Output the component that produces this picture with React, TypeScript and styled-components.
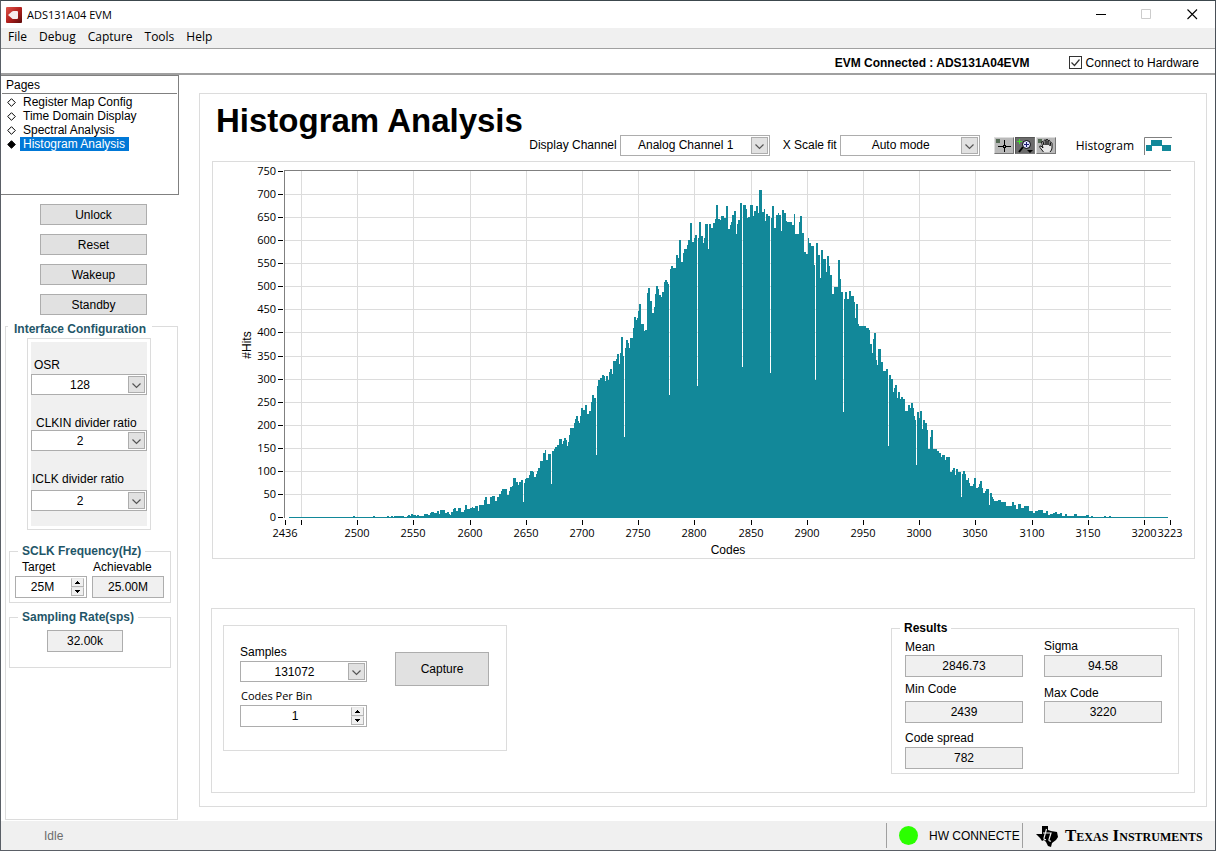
import React from "react";
import styled, { createGlobalStyle } from "styled-components";

const sans = `"Liberation Sans", Arial, sans-serif`;
const ui = `"Open Sans", "Segoe UI", sans-serif`;
const teal = "#128899";
const line = "#dcdcdc";
const edge = "#adadad";

const GlobalStyle = createGlobalStyle`
  *, *::before, *::after { box-sizing: border-box; }
  body { margin: 0; background: #fff; color: #000; font: 12px/14px ${sans}; }
  button, input, select { font: inherit; color: inherit; margin: 0; border-radius: 0; }
`;

const Window = styled.div`
  min-height: 100vh;
  display: flex;
  flex-direction: column;
  background: #fff;
  border: 1px solid #5a5f66;
  border-top-color: #3c474d;
  border-right-color: #4a5058;
`;

const TitleBar = styled.header`
  display: flex;
  align-items: center;
  height: 27px;
  padding-left: 5px;
  font-family: ${ui};
  font-size: 11px;
`;

const WindowTitle = styled.span`
  flex: 1;
  padding-left: 5px;
`;

const CaptionButton = styled.button`
  width: 46px;
  height: 27px;
  padding: 0;
  border: 0;
  background: transparent;
  display: grid;
  place-items: center;
`;

const MenuBar = styled.nav`
  display: flex;
  gap: 12px;
  height: 21px;
  padding: 1px 7px 0;
  align-items: flex-start;
  background: #f0f0f0;
  border-bottom: 1px solid #a0a0a0;
`;

const MenuItem = styled.button`
  padding: 0;
  border: 0;
  background: transparent;
  font-family: ${ui};
  line-height: 16px;
`;

const ConnectionBar = styled.div`
  display: flex;
  justify-content: flex-end;
  align-items: center;
  gap: 39px;
  height: 26px;
  padding: 3px 16px 0 0;
  border-bottom: 2px solid #a0a0a0;
`;

const CheckLabel = styled.label`
  display: flex;
  align-items: center;
  gap: 4px;
`;

const CheckBoxFrame = styled.span`
  position: relative;
  display: block;
  width: 13px;
  height: 13px;
  input { appearance: none; display: block; width: 13px; height: 13px; border: 1px solid #333; background: #fff; }
  svg { position: absolute; inset: 0; pointer-events: none; visibility: hidden; }
  input:checked + svg { visibility: visible; }
`;

const Body = styled.div`
  flex: 1;
  display: flex;
`;

const Sidebar = styled.aside`
  flex: 0 0 178px;
  display: flex;
  flex-direction: column;
`;

const PagesBox = styled.section`
  height: 120px;
  border: 1px solid #808080;
  border-left: 0;
`;

const PagesHeading = styled.h2`
  margin: 0 1px;
  padding: 2px 4px 1px;
  border-bottom: 1px solid #808080;
  font-size: 12px;
  font-weight: 400;
`;

const PageList = styled.ul`
  list-style: none;
  margin: 0;
  padding: 1px 0 0 6px;
`;

const PageRow = styled.li`
  display: flex;
  align-items: center;
  gap: 4px;
  height: 14px;
`;

const PageLink = styled.a<{ $selected?: boolean }>`
  padding: 0 4px 0 3px;
  height: 14px;
  text-decoration: none;
  color: ${p => (p.$selected ? "#fff" : "#000")};
  background: ${p => (p.$selected ? "#0078d7" : "transparent")};
`;

const CommandStack = styled.div`
  display: flex;
  flex-direction: column;
  align-items: center;
  gap: 9px;
  padding: 9px 0 0 7px;
`;

const PushButton = styled.button<{ $large?: boolean }>`
  width: ${p => (p.$large ? 94 : 107)}px;
  height: ${p => (p.$large ? 34 : 21)}px;
  padding: 0;
  background: #e1e1e1;
  border: 1px solid ${edge};
`;

const Group = styled.fieldset<{ $dark?: boolean }>`
  margin: 0;
  min-width: 0;
  padding: 0;
  border: 1px solid ${line};
  legend {
    margin-left: 8px;
    padding: 0 4px;
    font-weight: 700;
    color: ${p => (p.$dark ? "#000" : "#1f5668")};
    white-space: nowrap;
  }
`;

const InterfaceGroup = styled(Group)`
  flex: 1;
  margin: 1px 1px 1px 4px;
  > legend { margin-left: 2px; padding: 6px 6px 0; }
`;

const InterfaceContent = styled.div`
  padding: 0 6px 0 3px;
`;

const DividerFrame = styled.div`
  width: 124px;
  margin: 2px 0 14px 18px;
  padding: 3px;
  border: 1px solid ${line};
`;

const DividerPanel = styled.div`
  padding: 16px 0 15px;
  background: #f0f0f0;
`;

const RateGroup = styled(Group)`
  margin-top: 7px;
`;

const FrequencyRow = styled.div`
  display: flex;
  justify-content: space-between;
  padding: 2px 6px 4px 5px;
`;

const RateRow = styled.div`
  display: flex;
  padding: 6px 0 15px 37px;
`;

const Field = styled.div<{ $gap?: number; $top?: number; $indent?: number }>`
  display: flex;
  flex-direction: column;
  gap: ${p => p.$gap ?? 2}px;
  margin-top: ${p => p.$top ?? 0}px;
  > label { padding-left: ${p => p.$indent ?? 0}px; white-space: nowrap; }
`;

const UiLabel = styled.label`
  font-family: ${ui};
  font-size: 11px;
`;

const SelectFrame = styled.span<{ $width: number }>`
  position: relative;
  display: block;
  flex: none;
  width: ${p => p.$width}px;
  height: 21px;
  select {
    appearance: none;
    display: block;
    width: 100%;
    height: 21px;
    padding: 0 20px 0 2px;
    border: 1px solid ${edge};
    background: #fff;
    text-align: center;
    text-align-last: center;
  }
  svg { position: absolute; right: 2px; top: 2px; pointer-events: none; }
`;

const Readout = styled.input<{ $width: number }>`
  width: ${p => p.$width}px;
  height: 22px;
  padding: 0;
  border: 1px solid ${edge};
  background: #f0f0f0;
  text-align: center;
`;

const SpinFrame = styled.span<{ $width: number }>`
  display: flex;
  width: ${p => p.$width}px;
  height: 22px;
  padding: 1px 2px 1px 0;
  border: 1px solid ${edge};
  background: #fff;
  input { flex: 1; min-width: 0; padding: 0 2px 0 0; border: 0; background: transparent; text-align: center; }
`;

const SpinButtons = styled.span`
  display: flex;
  flex-direction: column;
  width: 13px;
`;

const SpinButton = styled.button`
  flex: 1;
  display: grid;
  place-items: center;
  padding: 0;
  border: 1px solid #b5b5b5;
  border-top-color: #e8e8e8;
  background: #f0f0f0;
`;

const Main = styled.main`
  flex: 1;
  min-width: 0;
  margin: 18px 8px 14px 20px;
  padding: 0 11px 12px 12px;
  border: 1px solid ${line};
`;

const MainHead = styled.div`
  display: flex;
  justify-content: space-between;
  height: 67px;
  padding: 0 23px 0 4px;
`;

const Heading = styled.h1`
  margin: 0;
  padding-top: 9px;
  font-size: 33px;
  line-height: 36px;
  white-space: nowrap;
`;

const Toolbar = styled.div`
  display: flex;
  align-items: center;
  height: 22px;
  margin-top: 40px;
`;

const ToolbarField = styled.div`
  display: flex;
  align-items: center;
  gap: 3px;
  margin-right: 13px;
  white-space: nowrap;
`;

const Palette = styled.div`
  display: flex;
  gap: 1px;
  margin: 0 20px 0 1px;
`;

const PaletteButton = styled.button<{ $active?: boolean }>`
  width: 20px;
  height: 17px;
  padding: 0;
  border: 1px solid;
  border-color: ${p => (p.$active ? "#555 #777 #777 #555" : "#dedede #777 #777 #dedede")};
  background: ${p => (p.$active ? "#6c6c6c" : "#b9b9b9")};
  svg { display: block; }
`;

const PlotLegend = styled.div`
  display: flex;
  align-items: center;
  gap: 10px;
  margin-top: 2px;
  font-family: ${ui};
`;

const ChartPanel = styled.section`
  border: 1px solid ${line};
  svg { display: block; width: 100%; height: auto; }
`;

const LowerPanel = styled.section`
  display: flex;
  justify-content: space-between;
  align-items: flex-start;
  margin: 49px 0 0 -1px;
  min-height: 185px;
  padding: 0 15px 0 11px;
  border: 1px solid ${line};
`;

const CaptureBox = styled.div`
  display: flex;
  gap: 28px;
  align-items: flex-start;
  width: 284px;
  height: 126px;
  margin-top: 16px;
  padding: 19px 0 0 16px;
  border: 1px solid ${line};
  > button { margin-top: 7px; }
`;

const ResultsGroup = styled(Group)`
  width: 288px;
  margin-top: 12px;
`;

const ResultsGrid = styled.div`
  display: grid;
  grid-template-columns: 118px 118px;
  grid-auto-rows: 41px;
  justify-content: space-between;
  align-items: end;
  row-gap: 5px;
  padding: 1px 16px 4px 13px;
`;

const StatusBar = styled.footer`
  display: flex;
  align-items: center;
  height: 29px;
  padding-right: 9px;
  background: #f0f0f0;
`;

const StatusText = styled.span`
  flex: 1;
  padding-left: 43px;
  color: #6d6d6d;
`;

const Connection = styled.div`
  display: flex;
  align-items: center;
  gap: 11px;
  width: 137px;
  height: 25px;
  padding-left: 12px;
  border: solid #a0a0a0;
  border-width: 0 1px;
  white-space: nowrap;
`;

const Lamp = styled.span`
  width: 19px;
  height: 19px;
  border-radius: 50%;
  background: #2bff00;
`;

const Brand = styled.div`
  display: flex;
  align-items: center;
  gap: 7px;
  width: 183px;
  padding-left: 13px;
  white-space: nowrap;
`;

const BrandName = styled.span`
  font: 700 17px/20px "Liberation Serif", "Times New Roman", serif;
  font-variant: small-caps;
`;

function Select({ id, value, width }: { id: string; value: string; width: number }) {
  return (
    <SelectFrame $width={width}>
      <select id={id} defaultValue={value}>
        <option>{value}</option>
      </select>
      <svg width="17" height="17" viewBox="0 0 17 17" aria-hidden="true">
        <rect x=".5" y=".5" width="16" height="16" fill="#e1e1e1" stroke="#adadad" />
        <path d="M4.5 7.5l4 4 4-4" fill="none" stroke="#555" strokeWidth="1.2" />
      </svg>
    </SelectFrame>
  );
}

function Spinner({ id, value, width }: { id: string; value: string; width: number }) {
  return (
    <SpinFrame $width={width}>
      <input id={id} type="text" defaultValue={value} />
      <SpinButtons>
        <SpinButton type="button" aria-label="Increase">
          <svg width="5" height="3" viewBox="0 0 5 3"><path d="M2 0h1v1h1v1h1v1H0V2h1V1h1z" /></svg>
        </SpinButton>
        <SpinButton type="button" aria-label="Decrease">
          <svg width="5" height="3" viewBox="0 0 5 3"><path d="M0 0h5v1H4v1H3v1H2V2H1V1H0z" /></svg>
        </SpinButton>
      </SpinButtons>
    </SpinFrame>
  );
}

/* Outline of the histogram: "x,height" where each level starts, in plot units. */
const LEVELS = `4,1 68,2 70,1 88,2 90,1 102,2 104,1 106,2 108,1 109,2 119,1 122,2 123,3 125,2 126,4 128,3 131,2 132,3
134,2 139,4 143,3 145,5 146,6 149,5 152,7 154,4 155,8 160,5 162,6 164,4 165,3 166,6 168,9 169,10 171,7 173,10 176,6
179,8 180,13 182,9 185,10 187,11 188,10 190,12 193,7 194,13 199,18 200,21 202,14 205,21 207,22 210,17 212,21 214,24
216,27 217,29 222,23 224,27 225,31 227,32 228,40 231,36 233,33 234,36 236,38 238,16 239,35 240,39 241,40 244,43
245,47 248,46 249,41 251,44 252,47 253,50 255,57 258,65 260,68 261,58 263,64 266,34 267,67 269,69 270,71 272,73
274,79 277,74 278,77 279,80 281,78 282,72 283,76 284,83 285,90 289,95 290,99 291,102 293,97 294,95 295,102 296,110
298,108 300,113 302,104 304,107 306,116 307,123 309,120 311,63 312,132 313,138 315,140 317,143 319,142 320,137
321,142 323,138 324,146 325,149 327,144 328,157 331,159 332,164 334,154 335,165 336,181 338,162 339,81 340,170
341,178 343,175 344,170 345,180 348,190 349,201 351,198 352,200 353,207 354,214 356,194 359,187 360,188 362,225
363,230 365,217 367,205 369,211 370,224 371,232 373,229 374,223 376,221 377,226 379,236 380,238 382,236 383,234
384,123 385,249 386,252 388,250 391,263 393,260 394,278 396,256 398,265 399,269 402,273 403,278 405,295 407,276
409,280 410,283 412,132 413,280 414,296 416,282 418,275 419,280 420,294 423,269 424,294 426,290 428,295 430,299
431,313 433,299 435,298 436,302 439,300 441,312 443,289 445,293 446,296 447,303 449,307 451,284 452,294 453,298
455,315 457,151 458,313 461,309 462,300 463,301 465,313 468,302 469,307 471,312 473,305 474,328 477,306 479,309
480,297 481,304 483,302 485,145 486,300 487,312 489,290 491,303 493,305 494,303 496,287 497,308 499,305 501,297
502,296 507,293 509,304 510,284 514,296 515,302 517,285 519,266 521,264 523,280 524,275 526,272 529,253 530,138
531,275 533,263 535,240 536,268 538,259 541,246 542,262 544,252 545,243 547,224 549,231 553,258 555,239 556,226
558,106 559,219 560,226 562,219 564,227 566,222 569,216 570,200 571,214 573,194 574,192 581,190 584,188 585,174
587,165 588,179 589,185 591,158 592,153 593,169 596,156 598,147 601,149 603,72 604,143 606,139 608,126 609,130
610,133 612,120 613,126 615,119 616,121 618,119 620,107 623,113 625,110 626,115 628,110 629,102 630,98 631,53
632,106 634,100 635,107 637,89 638,98 640,95 642,88 643,69 645,81 646,88 648,69 652,67 654,65 656,61 657,63 660,58
661,61 665,46 667,48 668,50 670,43 671,49 673,46 676,21 677,44 678,47 680,44 681,38 683,40 684,35 685,32 688,34
689,40 691,30 693,31 694,34 695,37 697,30 698,25 700,27 701,29 704,13 705,25 707,21 708,19 709,17 713,18 716,16
721,12 727,16 729,13 731,9 733,14 736,10 739,12 744,7 748,5 750,7 753,8 758,5 761,7 763,3 765,4 768,5 770,6 772,4
775,5 777,2 780,4 782,2 789,4 792,2 801,3 804,1 806,2 808,1 819,2 821,1 824,2 826,1`;

const outline =
  "M76 356" +
  LEVELS.split(/\s+/)
    .map(pair => pair.split(",").map(Number))
    .map(([x, h]) => `H${72 + x}V${356 - h}`)
    .join("") +
  "H955V356Z";

const yTicks = Array.from({ length: 16 }, (_, i) => ({ value: i * 50, y: Math.round(355.05 - i * 23.07) }));
const xTicks = Array.from({ length: 16 }, (_, i) => ({ value: 2450 + i * 50, x: Math.round(88 + i * 56.2) }));

function Histogram() {
  return (
    <svg viewBox="0 0 981 396" role="img" aria-label="Histogram of hits per code">
      <g fill={line} shapeRendering="crispEdges">
        {yTicks.slice(1, 15).map(t => <rect key={t.value} x="72" y={t.y} width="886" height="1" />)}
        {xTicks.map(t => <rect key={t.value} x={t.x} y="9" width="1" height="347" />)}
      </g>
      <g fill="#808080" shapeRendering="crispEdges">
        <rect x="71" y="8" width="887" height="1" />
        <rect x="71" y="8" width="1" height="348" />
      </g>
      <path d={outline} fill={teal} shapeRendering="crispEdges" />
      <g fill="#000" shapeRendering="crispEdges">
        {yTicks.map(t => <rect key={t.value} x="65" y={t.y} width="5" height="1" />)}
        {[72, ...xTicks.map(t => t.x), 957].map(x => <rect key={x} x={x} y="358" width="1" height="5" />)}
      </g>
      <g fontFamily={ui} fontSize="11">
        {yTicks.map(t => <text key={t.value} x="63" y={t.y + 4} textAnchor="end">{t.value}</text>)}
        <g textAnchor="middle">
          <text x="72" y="375">2436</text>
          {xTicks.slice(1).map(t => <text key={t.value} x={t.x} y="375">{t.value}</text>)}
          <text x="957" y="375">3223</text>
        </g>
      </g>
      <g fontFamily={sans} fontSize="12" textAnchor="middle">
        <text x="515" y="392">Codes</text>
        <text transform="translate(38 183) rotate(-90)">#Hits</text>
      </g>
    </svg>
  );
}

function Diamond({ filled }: { filled?: boolean }) {
  return (
    <svg width="9" height="9" viewBox="0 0 9 9" aria-hidden="true">
      <path d="M4.5.7L8.3 4.5 4.5 8.3.7 4.5z" fill={filled ? "#000" : "#fff"} stroke="#000" />
    </svg>
  );
}

function Result({ id, label, value, gap }: { id: string; label: string; value: string; gap?: number }) {
  return (
    <Field $gap={gap}>
      <label htmlFor={id}>{label}</label>
      <Readout id={id} readOnly value={value} $width={118} />
    </Field>
  );
}

const pages = ["Register Map Config", "Time Domain Display", "Spectral Analysis", "Histogram Analysis"];

export default function App() {
  return (
    <>
      <GlobalStyle />
      <Window>
        <TitleBar>
          <svg width="16" height="16" viewBox="0 0 16 16" aria-hidden="true">
            <defs>
              <linearGradient id="badge" x1="0" y1="0" x2="1" y2="1">
                <stop offset="0" stopColor="#e0564c" />
                <stop offset=".5" stopColor="#b3201d" />
                <stop offset="1" stopColor="#5c0b0b" />
              </linearGradient>
            </defs>
            <rect width="16" height="16" rx="1" fill="url(#badge)" />
            <path d="M2 8l4-3.500q.5-.5 1.500-.5H11q1 0 1 1v6q0 1-1 1H7.500q-1 0-1.500-.5z" fill="#f6ecec" />
          </svg>
          <WindowTitle>ADS131A04 EVM</WindowTitle>
          <CaptionButton type="button" aria-label="Minimize">
            <svg width="11" height="11" viewBox="0 0 11 11"><path d="M1 5.5h10" stroke="#000" /></svg>
          </CaptionButton>
          <CaptionButton type="button" aria-label="Maximize">
            <svg width="11" height="11" viewBox="0 0 11 11"><path d="M.5.5h9v9h-9z" fill="none" stroke="#ccc" /></svg>
          </CaptionButton>
          <CaptionButton type="button" aria-label="Close">
            <svg width="11" height="11" viewBox="0 0 11 11"><path d="M.5.5l9.500 9.500M10 .5L.5 10" stroke="#000" strokeWidth="1.1" /></svg>
          </CaptionButton>
        </TitleBar>

        <MenuBar>
          {["File", "Debug", "Capture", "Tools", "Help"].map(m => <MenuItem key={m} type="button">{m}</MenuItem>)}
        </MenuBar>

        <ConnectionBar>
          <strong>EVM Connected : ADS131A04EVM</strong>
          <CheckLabel>
            <CheckBoxFrame>
              <input type="checkbox" defaultChecked />
              <svg width="13" height="13" viewBox="0 0 13 13"><path d="M2.5 6.5l3 3 5-6" fill="none" stroke="#333" strokeWidth="1.2" /></svg>
            </CheckBoxFrame>
            Connect to Hardware
          </CheckLabel>
        </ConnectionBar>

        <Body>
          <Sidebar>
            <PagesBox>
              <PagesHeading>Pages</PagesHeading>
              <PageList>
                {pages.map((p, i) => (
                  <PageRow key={p}>
                    <Diamond filled={i === 3} />
                    <PageLink href="#" $selected={i === 3}>{p}</PageLink>
                  </PageRow>
                ))}
              </PageList>
            </PagesBox>

            <CommandStack>
              {["Unlock", "Reset", "Wakeup", "Standby"].map(c => <PushButton key={c} type="button">{c}</PushButton>)}
            </CommandStack>

            <InterfaceGroup>
              <legend>Interface Configuration</legend>
              <InterfaceContent>
                <DividerFrame>
                  <DividerPanel>
                    <Field $indent={3}>
                      <label htmlFor="osr">OSR</label>
                      <Select id="osr" value="128" width={116} />
                    </Field>
                    <Field $indent={5} $top={21} $gap={0}>
                      <label htmlFor="clkin">CLKIN divider ratio</label>
                      <Select id="clkin" value="2" width={116} />
                    </Field>
                    <Field $indent={1} $top={21} $gap={4}>
                      <label htmlFor="iclk">ICLK divider ratio</label>
                      <Select id="iclk" value="2" width={116} />
                    </Field>
                  </DividerPanel>
                </DividerFrame>

                <Group>
                  <legend>SCLK Frequency(Hz)</legend>
                  <FrequencyRow>
                    <Field $indent={7}>
                      <label htmlFor="target">Target</label>
                      <Spinner id="target" value="25M" width={72} />
                    </Field>
                    <Field $indent={1}>
                      <label htmlFor="achievable">Achievable</label>
                      <Readout id="achievable" readOnly value="25.00M" $width={72} />
                    </Field>
                  </FrequencyRow>
                </Group>

                <RateGroup>
                  <legend>Sampling Rate(sps)</legend>
                  <RateRow>
                    <Readout aria-label="Sampling Rate(sps)" readOnly value="32.00k" $width={76} />
                  </RateRow>
                </RateGroup>
              </InterfaceContent>
            </InterfaceGroup>
          </Sidebar>

          <Main>
            <MainHead>
              <Heading>Histogram Analysis</Heading>
              <Toolbar>
                <ToolbarField>
                  <label htmlFor="channel">Display Channel</label>
                  <Select id="channel" value="Analog Channel 1" width={150} />
                </ToolbarField>
                <ToolbarField>
                  <label htmlFor="xscale">X Scale fit</label>
                  <Select id="xscale" value="Auto mode" width={140} />
                </ToolbarField>
                <Palette>
                  <PaletteButton type="button" aria-label="Cursor">
                    <svg width="18" height="15" viewBox="0 0 18 15">
                      <rect x="1" y="1" width="4" height="4" fill="#566b56" />
                      <path d="M3 8.5h13M9.5 2v12" stroke="#000" />
                      <rect x="8" y="7" width="3" height="3" fill="#000" />
                      <rect x="9" y="8" width="1" height="1" fill="#b9b9b9" />
                    </svg>
                  </PaletteButton>
                  <PaletteButton type="button" aria-label="Zoom" $active>
                    <svg width="18" height="15" viewBox="0 0 18 15">
                      <path d="M3.5 1v5M1 3.5h5" stroke="#3fe02a" />
                      <path d="M7 9l-4 5" stroke="#000" strokeWidth="2" />
                      <circle cx="10.5" cy="6.5" r="4" fill="#dfe0ff" stroke="#000" />
                      <path d="M8 6.5h5M10.5 4v5" stroke="#1c1c70" />
                      <path d="M11 12h6l-3 3z" fill="#000" />
                    </svg>
                  </PaletteButton>
                  <PaletteButton type="button" aria-label="Pan">
                    <svg width="18" height="15" viewBox="0 0 18 15">
                      <rect x="1" y="1" width="4" height="4" fill="#566b56" />
                      <path d="M6.5 14L3 9.5q-1-2 1-1.5l2 2-1.500-6q.5-1.500 1.500 0l1 3V2.500q1-1.500 2 0V7 2q1-1.500 2 0v5-4q1.500-1.500 2 0V8l.5-3q1.500-1 1.500.5V10q0 2-2 4" fill="#e8e8e8" stroke="#000" strokeWidth=".9" />
                    </svg>
                  </PaletteButton>
                </Palette>
                <PlotLegend>
                  <span>Histogram</span>
                  <svg width="28" height="18" viewBox="0 0 28 18" aria-hidden="true">
                    <path d="M.5 18V.5H28" fill="none" stroke="#808080" />
                    <path d="M2 8h5V3h11v5h9v6h-9V9H8v5H2z" fill={teal} />
                  </svg>
                </PlotLegend>
              </Toolbar>
            </MainHead>

            <ChartPanel>
              <Histogram />
            </ChartPanel>

            <LowerPanel>
              <CaptureBox>
                <div>
                  <Field>
                    <label htmlFor="samples">Samples</label>
                    <Select id="samples" value="131072" width={127} />
                  </Field>
                  <Field $top={7} $indent={1}>
                    <UiLabel htmlFor="bins">Codes Per Bin</UiLabel>
                    <Spinner id="bins" value="1" width={127} />
                  </Field>
                </div>
                <PushButton type="button" $large>Capture</PushButton>
              </CaptureBox>

              <ResultsGroup $dark>
                <legend>Results</legend>
                <ResultsGrid>
                  <Result id="mean" label="Mean" value="2846.73" gap={1} />
                  <Result id="sigma" label="Sigma" value="94.58" />
                  <Result id="min" label="Min Code" value="2439" gap={5} />
                  <Result id="max" label="Max Code" value="3220" gap={1} />
                  <Result id="spread" label="Code spread" value="782" />
                </ResultsGrid>
              </ResultsGroup>
            </LowerPanel>
          </Main>
        </Body>

        <StatusBar>
          <StatusText>Idle</StatusText>
          <Connection>
            <Lamp />
            HW CONNECTE
          </Connection>
          <Brand>
            <svg width="22" height="22" viewBox="0 0 22 22" aria-hidden="true">
              <path d="M6 1h6v4l3 1 6 1 1 5-2 3-4 3-1 4-3-1-2-4-2-2-2 1-2-3-4-4h6z" fill="#000" />
              <path d="M10.500 4l-2.500 9q-.2 2 2 1.500M7 8h8l-2 6.500q-.2 2 2 1.500M16.200 4l-.6 2" fill="none" stroke="#f0f0f0" strokeWidth="1.2" />
            </svg>
            <BrandName>Texas Instruments</BrandName>
          </Brand>
        </StatusBar>
      </Window>
    </>
  );
}
